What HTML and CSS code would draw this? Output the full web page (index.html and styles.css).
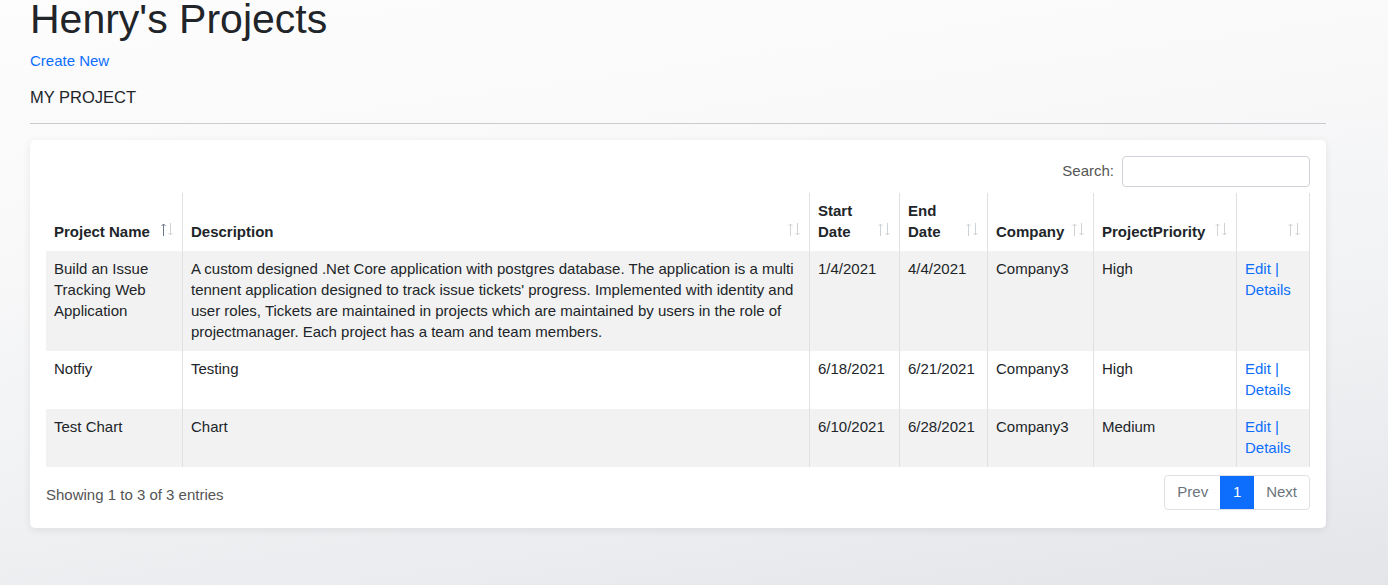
FILE: index.html
```html
<!DOCTYPE html>
<html lang="en">
<head>
<meta charset="utf-8">
<title>Henry's Projects</title>
<link rel="stylesheet" href="styles.css">
</head>
<body>
<div class="page">
  <h1 class="title">Henry's Projects</h1>
  <a class="create" href="#">Create New</a>
  <div class="section">MY PROJECT</div>
  <hr class="rule">
  <div class="card">
    <div class="search-row">
      <label class="search-label">Search:</label>
      <input class="search-input" type="text">
    </div>
    <table class="grid">
      <colgroup>
        <col class="c1"><col class="c2"><col class="c3"><col class="c4"><col class="c5"><col class="c6"><col class="c7">
      </colgroup>
      <thead>
        <tr>
          <th class="active">Project Name<svg class="sort" width="12" height="13" viewBox="0 0 12 13"><path class="u" d="M2.5 13V1M0.5 3L2.5 1L4.5 3"/><path class="d" d="M9.5 0V12M7.5 10L9.5 12L11.5 10"/></svg></th>
          <th>Description<svg class="sort" width="12" height="13" viewBox="0 0 12 13"><path class="u" d="M2.5 13V1M0.5 3L2.5 1L4.5 3"/><path class="d" d="M9.5 0V12M7.5 10L9.5 12L11.5 10"/></svg></th>
          <th>Start Date<svg class="sort" width="12" height="13" viewBox="0 0 12 13"><path class="u" d="M2.5 13V1M0.5 3L2.5 1L4.5 3"/><path class="d" d="M9.5 0V12M7.5 10L9.5 12L11.5 10"/></svg></th>
          <th>End Date<svg class="sort" width="12" height="13" viewBox="0 0 12 13"><path class="u" d="M2.5 13V1M0.5 3L2.5 1L4.5 3"/><path class="d" d="M9.5 0V12M7.5 10L9.5 12L11.5 10"/></svg></th>
          <th>Company<svg class="sort" width="12" height="13" viewBox="0 0 12 13"><path class="u" d="M2.5 13V1M0.5 3L2.5 1L4.5 3"/><path class="d" d="M9.5 0V12M7.5 10L9.5 12L11.5 10"/></svg></th>
          <th>ProjectPriority<svg class="sort" width="12" height="13" viewBox="0 0 12 13"><path class="u" d="M2.5 13V1M0.5 3L2.5 1L4.5 3"/><path class="d" d="M9.5 0V12M7.5 10L9.5 12L11.5 10"/></svg></th>
          <th><svg class="sort" width="12" height="13" viewBox="0 0 12 13"><path class="u" d="M2.5 13V1M0.5 3L2.5 1L4.5 3"/><path class="d" d="M9.5 0V12M7.5 10L9.5 12L11.5 10"/></svg></th>
        </tr>
      </thead>
      <tbody>
        <tr class="odd">
          <td>Build an Issue Tracking Web Application</td>
          <td>A custom designed .Net Core application with postgres database. The application is a multi tennent application designed to track issue tickets' progress. Implemented with identity and user roles, Tickets are maintained in projects which are maintained by users in the role of projectmanager. Each project has a team and team members.</td>
          <td>1/4/2021</td>
          <td>4/4/2021</td>
          <td>Company3</td>
          <td>High</td>
          <td class="actions"><a href="#">Edit</a> | <a href="#">Details</a></td>
        </tr>
        <tr>
          <td>Notfiy</td>
          <td>Testing</td>
          <td>6/18/2021</td>
          <td>6/21/2021</td>
          <td>Company3</td>
          <td>High</td>
          <td class="actions"><a href="#">Edit</a> | <a href="#">Details</a></td>
        </tr>
        <tr class="odd">
          <td>Test Chart</td>
          <td>Chart</td>
          <td>6/10/2021</td>
          <td>6/28/2021</td>
          <td>Company3</td>
          <td>Medium</td>
          <td class="actions"><a href="#">Edit</a> | <a href="#">Details</a></td>
        </tr>
      </tbody>
    </table>
    <div class="footer-row">
      <div class="info">Showing 1 to 3 of 3 entries</div>
      <div class="pager">
        <a class="pg prev" href="#">Prev</a>
        <a class="pg current" href="#">1</a>
        <a class="pg next" href="#">Next</a>
      </div>
    </div>
  </div>
</div>
</body>
</html>
```

FILE: styles.css
```css
html, body {
  margin: 0;
  padding: 0;
}
body {
  width: 1388px;
  height: 585px;
  overflow: hidden;
  font-family: "Liberation Sans", Arial, sans-serif;
  font-size: 15px;
  color: #212529;
  background: linear-gradient(172deg, #fdfdfe 0%, #f8f8f9 35%, #eef0f2 70%, #e3e5e9 100%);
}
.page {
  display: flex;
  flex-direction: column;
  align-items: flex-start;
  width: 1296px;
  padding-left: 30px;
}
.title {
  margin: -1px 0 0 0;
  font-size: 41px;
  font-weight: 400;
  line-height: 41px;
  color: #212529;
}
.create {
  margin-top: 10px;
  line-height: 21px;
  font-size: 15px;
  color: #0d6efd;
  text-decoration: none;
}
.section {
  margin-top: 14px;
  font-size: 16.5px;
  line-height: 24px;
  color: #212529;
}
.rule {
  align-self: stretch;
  margin: 14px 0 0 0;
  border: 0;
  height: 1px;
  background: #c9cbcf;
}
.card {
  align-self: stretch;
  margin-top: 16px;
  background: #fff;
  border-radius: 5px;
  box-shadow: 0 2px 8px rgba(0, 0, 0, 0.08);
  padding: 16px 16px 18px 16px;
}
.search-row {
  display: flex;
  justify-content: flex-end;
  align-items: center;
  gap: 8px;
  color: #555;
}
.search-label {
  font-size: 15px;
  margin-bottom: 2px;
}
.search-input {
  box-sizing: border-box;
  width: 188px;
  height: 31px;
  border: 1px solid #ced4da;
  border-radius: 4px;
  margin: 0;
  padding: 0 8px;
  font: inherit;
}
.grid {
  width: 100%;
  margin-top: 6px;
  border-collapse: separate;
  border-spacing: 0;
  table-layout: fixed;
}
.c1 { width: 136px; }
.c2 { width: 627px; }
.c3 { width: 90px; }
.c4 { width: 88px; }
.c5 { width: 106px; }
.c6 { width: 143px; }
.c7 { width: 74px; }
.grid th,
.grid td {
  padding: 7px 8px 9px 8px;
  line-height: 21px;
  text-align: left;
  border-left: 1px solid #dee2e6;
}
.grid th:first-child,
.grid td:first-child {
  border-left: 0;
}
.grid th:last-child,
.grid td:last-child {
  border-right: 1px solid #dee2e6;
}
.grid th {
  position: relative;
  vertical-align: bottom;
  font-weight: 700;
  padding-right: 26px;
}
.grid td {
  vertical-align: top;
}
.grid tr.odd td {
  background: #f2f2f2;
}
.sort {
  position: absolute;
  right: 9px;
  bottom: 15px;
  fill: none;
  stroke-width: 1;
}
.sort .u,
.sort .d {
  stroke: #cfd2d5;
}
.active .sort .u {
  stroke: #6d7a8a;
}
.actions {
  color: #0d6efd;
}
.actions a {
  color: #0d6efd;
  text-decoration: none;
}
.footer-row {
  display: flex;
  justify-content: space-between;
  align-items: center;
  margin-top: 8px;
}
.info {
  color: #555;
  padding-top: 4px;
}
.pager {
  display: flex;
  border: 1px solid #dee2e6;
  border-radius: 4px;
  overflow: hidden;
  height: 33px;
}
.pg {
  display: flex;
  align-items: center;
  justify-content: center;
  padding: 0 12px 2px 12px;
  color: #6c757d;
  text-decoration: none;
  font-size: 15px;
}
.pg.current {
  background: #0d6efd;
  color: #fff;
  width: 34px;
  box-sizing: border-box;
  padding: 0 0 2px 0;
}
```
